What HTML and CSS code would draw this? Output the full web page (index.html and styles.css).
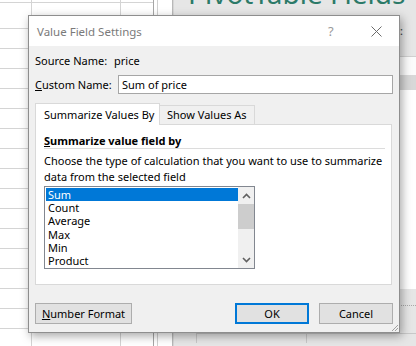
FILE: index.html
```html
<!DOCTYPE html>
<html lang="en">
<head>
  <meta charset="UTF-8" />
  <meta name="viewport" content="width=device-width, initial-scale=1.0" />
  <title>Value Field Settings</title>
  <link rel="stylesheet" href="styles.css">
</head>
<body>
  <div class="desktop">
    <div class="sheet"></div>
    <div class="split"></div>
    <div class="pane">
      <div class="pane-title">PivotTable Fields</div>
      <div class="pane-top"><span class="pane-label">report:</span></div>
      <div class="pane-search"></div>
      <div class="pane-head"></div>
      <div class="pane-fields"></div>
      <div class="pane-areas">
        <div class="dots"></div>
        <span class="area-label">Rows:</span>
        <div class="area-boxes">
          <span class="area-box"></span>
          <span class="area-box"></span>
        </div>
      </div>
    </div>
  </div>

  <div class="dialog">
    <div class="titlebar">
      <span class="title">Value Field Settings</span>
      <span class="help">?</span>
      <span class="close">
        <svg width="11" height="11" viewBox="0 0 11 11"><path d="M0.5 0.5L10.5 10.5M10.5 0.5L0.5 10.5" stroke="#6b6b6b" stroke-width="1" fill="none"/></svg>
      </span>
    </div>

    <div class="dlg-body">
      <div class="row">
        <span class="lbl src">Source Name:</span>
        <span>price</span>
      </div>
      <div class="row">
        <span class="lbl custom"><u>C</u>ustom Name:</span>
        <div class="input">Sum of price</div>
      </div>

      <div class="tabs">
        <div class="tab active">Summarize Values By</div>
        <div class="tab">Show Values As</div>
      </div>
      <div class="panel">
        <div class="heading"><u>S</u>ummarize value field by</div>
        <p class="desc">Choose the type of calculation that you want to use to summarize<br>data from the selected field</p>
        <div class="list">
          <ul class="items">
            <li class="sel">Sum</li>
            <li>Count</li>
            <li>Average</li>
            <li>Max</li>
            <li>Min</li>
            <li>Product</li>
          </ul>
          <div class="scrollbar">
            <span class="arrow">
              <svg width="9" height="6" viewBox="0 0 9 6"><path d="M1 5L4.5 1.5L8 5" stroke="#606060" stroke-width="1.6" fill="none"/></svg>
            </span>
            <span class="thumb"></span>
            <span class="track"></span>
            <span class="arrow">
              <svg width="9" height="6" viewBox="0 0 9 6"><path d="M1 1L4.5 4.5L8 1" stroke="#606060" stroke-width="1.6" fill="none"/></svg>
            </span>
          </div>
        </div>
      </div>

      <div class="buttons">
        <button class="btn wide"><u>N</u>umber Format</button>
        <span class="grow"></span>
        <button class="btn default">OK</button>
        <button class="btn">Cancel</button>
      </div>
    </div>
    <span class="grip">
      <svg width="8" height="8" viewBox="0 0 8 8"><path d="M7 1L1 7M7 4L4 7" stroke="#a0a0a0" stroke-width="1" fill="none"/></svg>
    </span>
  </div>
</body>
</html>
```

FILE: styles.css
```css
* {
  box-sizing: border-box;
}

body {
  margin: 0;
  width: 416px;
  height: 346px;
  overflow: hidden;
  position: relative;
  font-family: "Noto Sans", "Open Sans", sans-serif;
  font-size: 11px;
  color: #000;
  background: #fff;
}

/* background: worksheet + pivot pane */
.desktop {
  display: flex;
  height: 346px;
}

.sheet {
  width: 207px;
  background-color: #fff;
  background-image:
    repeating-linear-gradient(to bottom, transparent 0 19px, #d4d4d4 19px 20px),
    repeating-linear-gradient(to right, transparent 0 63px, #d4d4d4 63px 64px);
  background-position: 0 9px, 57px 0;
  border-right: 1px solid #a6a6a6;
}

.split {
  width: 21px;
  background: #fff;
  border-left: 1px solid #d0d0d0;
  border-right: 1px solid #b8b8b8;
  margin-left: 3px;
}

.pane {
  flex: 1;
  display: flex;
  flex-direction: column;
  background: #e6e6e6;
  border-left: 1px solid #d6d6d6;
}

.pane-title {
  height: 0;
  margin-left: 14px;
  font-size: 28px;
  line-height: 0;
  color: #2c7a68;
  white-space: nowrap;
  transform: translateY(-7px);
}

.pane-top {
  height: 57px;
  border-bottom: 1px solid #d0d0d0;
  display: flex;
  align-items: center;
  justify-content: flex-end;
  overflow: hidden;
}

.pane-label {
  white-space: nowrap;
  padding-top: 4px;
  margin-right: 13px;
  color: #333;
}

.pane-search {
  height: 18px;
  background: #fbfbfb;
}

.pane-head {
  height: 15px;
  background: #d8d8d8;
}

.pane-fields {
  height: 199px;
  background: #fff;
}

.pane-areas {
  flex: 1;
  background: #e6e6e6;
  padding: 16px 0 0 8px;
}

.dots {
  border-top: 1px dotted #a8a8a8;
}

.area-label {
  display: inline-block;
  margin-top: 4px;
  margin-left: 156px;
  color: #333;
}

.area-boxes {
  display: flex;
  margin-top: 8px;
  margin-left: 14px;
}

.area-box {
  width: 110px;
  height: 10px;
  border-top: 1px solid #c8c8c8;
  border-left: 1px solid #c8c8c8;
}

/* dialog window */
.dialog {
  position: absolute;
  left: 28px;
  top: 15px;
  width: 372px;
  height: 318px;
  border: 1px solid #8e8e8e;
  background: #f0f0f0;
  box-shadow: 2px 3px 9px rgba(0, 0, 0, 0.35);
  display: flex;
  flex-direction: column;
}

.titlebar {
  height: 30px;
  background: #fff;
  display: flex;
  align-items: center;
  padding-left: 8px;
}

.title {
  flex: 1;
  color: #7a7a7a;
  font-size: 11.5px;
}

.help {
  width: 10px;
  color: #9a9a9a;
  font-size: 13px;
  margin-right: 33px;
}

.close {
  display: flex;
  margin-right: 17px;
}

.dlg-body {
  flex: 1;
  padding: 6px 6px 0 6px;
  display: flex;
  flex-direction: column;
}

.row {
  display: flex;
  align-items: center;
  height: 16px;
}

.row + .row {
  margin-top: 7px;
  height: 19px;
}

.lbl.src {
  width: 79px;
}

.lbl.custom {
  width: 83px;
}

.input {
  width: 275px;
  height: 19px;
  line-height: 17px;
  border: 1px solid #a6a6a6;
  background: #fff;
  padding-left: 3px;
}

.tabs {
  display: flex;
  align-items: flex-end;
  margin-top: 9px;
  height: 21px;
  position: relative;
  z-index: 1;
}

.tab {
  height: 19px;
  width: 95px;
  line-height: 18px;
  padding-left: 7px;
  white-space: nowrap;
  border: 1px solid #d9d9d9;
  border-bottom: none;
  background: #f0f0f0;
}

.tab.active {
  height: 22px;
  width: 125px;
  padding-left: 8px;
  line-height: 21px;
  background: #fff;
  margin-bottom: -1px;
}

.tab.active + .tab {
  border-left: none;
}

.panel {
  height: 161px;
  margin-right: 1px;
  border: 1px solid #d9d9d9;
  background: #fff;
  padding: 8px 0 0 8px;
}

.heading {
  font-weight: bold;
  line-height: 15px;
  height: 16px;
  width: 341px;
  border-bottom: 1px solid #dcdcdc;
}

.desc {
  margin: 4px 0 0 0;
  line-height: 16px;
  white-space: nowrap;
}

.list {
  display: flex;
  width: 211px;
  height: 83px;
  margin-top: 1px;
  border: 1px solid #828790;
}

.items {
  list-style: none;
  margin: 0;
  padding: 1px 0 0 1px;
  flex: 1;
}

.items li {
  height: 13.2px;
  line-height: 13px;
  padding-left: 2px;
}

.items li.sel {
  background: #0078d7;
  color: #fff;
}

.scrollbar {
  width: 16px;
  background: #f0f0f0;
  display: flex;
  flex-direction: column;
}

.arrow {
  height: 17px;
  display: flex;
  align-items: center;
  justify-content: center;
}

.thumb {
  height: 25px;
  background: #cdcdcd;
}

.track {
  flex: 1;
}

.buttons {
  display: flex;
  margin-top: 18px;
}

.grow {
  flex: 1;
}

.btn {
  font: inherit;
  height: 21px;
  width: 74px;
  padding: 0;
  border: 1px solid #adadad;
  background: #e1e1e1;
  color: #000;
}

.btn.wide {
  width: 97px;
}

.btn + .btn {
  margin-left: 10px;
}

.btn.default {
  border: 2px solid #0078d7;
}

.grip {
  position: absolute;
  right: 0;
  bottom: 0;
  display: flex;
}
```
